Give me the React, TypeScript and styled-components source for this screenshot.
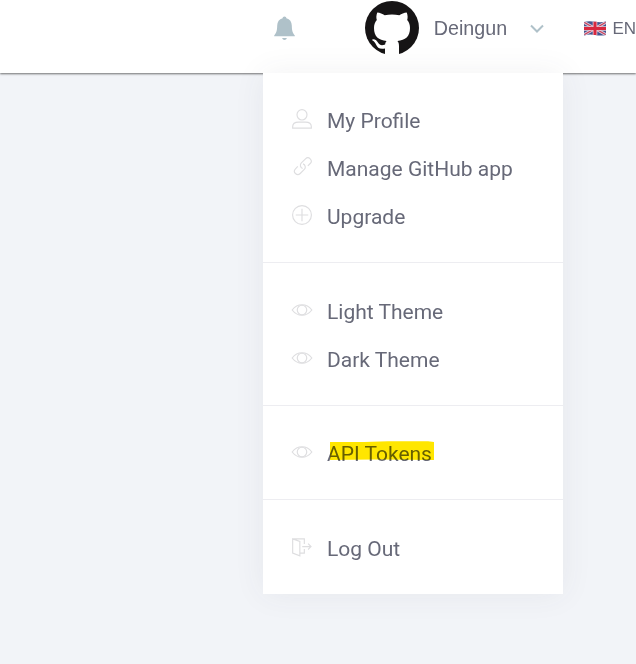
import React from "react";
import styled, { createGlobalStyle } from "styled-components";

const GlobalStyle = createGlobalStyle`
  * { box-sizing: border-box; }
  body { margin: 0; background: #f2f4f8; overflow: hidden; }
`;

const Page = styled.div`
  height: 664px;
  width: 636px;
  overflow: hidden;
  background: #f2f4f8;
  font-family: Roboto, sans-serif;
  color: #676978;
`;

const Header = styled.header`
  position: relative;
  display: flex;
  align-items: center;
  height: 73px;
  padding: 0 0 18px 272px;
  background: #fff;
  box-shadow: 0 1px 2px rgba(0, 0, 0, 0.55);
  font-family: "Liberation Sans", Arial, sans-serif;
`;

const BellButton = styled.span`
  display: flex;
  width: 93px;
  padding-top: 2px;
`;

const UserButton = styled.div`
  display: flex;
  align-items: center;
  width: 220px;
`;

const UserName = styled.span`
  width: 92px;
  margin-left: 15px;
  padding-top: 1px;
  font-size: 19.7px;
  line-height: 24px;
`;

const Language = styled.div`
  display: flex;
  align-items: center;
  gap: 6px;
  padding-top: 2px;
  font-size: 17px;
  white-space: nowrap;
`;

const Menu = styled.nav`
  position: absolute;
  top: 73px;
  left: 263px;
  width: 300px;
  background: #fff;
  box-shadow: 0 0 30px rgba(69, 65, 78, 0.07);
  font-family: Roboto, sans-serif;
`;

const Section = styled.div<{ $top?: number }>`
  padding: ${({ $top = 24 }) => $top}px 0 21px 29px;
  & + & { border-top: 1px solid #ededf1; }
`;

const Item = styled.div`
  display: flex;
  align-items: center;
  height: 48px;
  font-size: 21px;
  line-height: 28px;
  white-space: nowrap;
`;

const IconSlot = styled.span`
  display: flex;
  width: 35px;
  margin-top: -5px;
`;

const Label = styled.span`
  position: relative;
`;

const Highlight = styled.svg`
  position: absolute;
  left: 3px;
  top: 1px;
  mix-blend-mode: multiply;
`;

const paths = {
  user: (
    <>
      <ellipse cx="12" cy="7" rx="6" ry="6.2" />
      <path d="M.8 23v-1.600c0-3.800 3.400-5.600 7-5.600h8.400c3.600 0 7 1.800 7 5.600V23z" />
    </>
  ),
  link: (
    <g transform="translate(13 11) rotate(-45)">
      <path d="M4.500 4H8.500a4 4 0 0 0 0-8H1.500a4 4 0 0 0-3.600 5.800" />
      <path d="M-4.500-4H-8.500a4 4 0 0 0 0 8H-1.500a4 4 0 0 0 3.600-5.800" />
    </g>
  ),
  plus: (
    <>
      <circle cx="12" cy="12" r="11.300" />
      <path d="M12 4.500v15M4.500 12h15" />
    </>
  ),
  eye: (
    <>
      <path d="M.2 12S5 5.700 12 5.700 23.800 12 23.800 12 19 18.300 12 18.300.2 12 .2 12z" />
      <circle cx="12" cy="12" r="5.700" />
    </>
  ),
  logout: (
    <path d="M.8 2.200l8.600 3v17.500l-8.600-3.400zM.8 2.200h14v6.300M14.800 14.500v4.800H9.400M12.300 11.500h10.500M19.300 8l3.500 3.500-3.500 3.500" />
  ),
};

type IconName = keyof typeof paths;

const MenuIcon = ({ name }: { name: IconName }) => (
  <svg width="20" height="20" viewBox="0 0 24 24" fill="none" stroke="#dedee0" strokeWidth="1.400" overflow="visible">
    {paths[name]}
  </svg>
);

interface Entry {
  icon: IconName;
  text: string;
  marked?: boolean;
}

const sections: { top?: number; entries: Entry[] }[] = [
  {
    entries: [
      { icon: "user", text: "My Profile" },
      { icon: "link", text: "Manage GitHub app" },
      { icon: "plus", text: "Upgrade" },
    ],
  },
  {
    top: 25,
    entries: [
      { icon: "eye", text: "Light Theme" },
      { icon: "eye", text: "Dark Theme" },
    ],
  },
  { entries: [{ icon: "eye", text: "API Tokens", marked: true }] },
  { top: 25, entries: [{ icon: "logout", text: "Log Out" }] },
];

const Bell = () => (
  <svg width="24" height="25" viewBox="0 0 24 25" fill="#afc1c9">
    <path d="M12.500 .5c1.100 0 1.800.7 1.900 1.800 3.500.8 5.300 3.700 5.400 7.300.1 5.200.8 7.500 3 9.800v.9H2.200v-.9c2.200-2.300 2.900-4.600 3-9.800.1-3.600 1.900-6.500 5.400-7.300C10.700 1.200 11.400.5 12.500.5zM10.100 22h4.800c-.4 1.300-1.300 2-2.400 2s-2-.7-2.400-2z" />
  </svg>
);

const Avatar = () => (
  <svg width="54" height="54" viewBox="0 0 54 54">
    <circle cx="27" cy="27" r="27" fill="#161415" />
    <path
      fill="#fff"
      d="M12.300 11.400c2.600 0 5.200 1.400 7.400 2.900 4.700-1.200 9.900-1.200 14.600 0 2.200-1.500 4.800-2.900 7.400-2.900 1.100 2.700 1.200 5.300.5 7.700 2 2.300 2.800 4.900 2.800 7.900 0 8.600-4.600 12.200-12.600 13 1.300 1.400 1.600 3 1.600 5.200V54H20V47.500c-5.200 1-7.500-.5-9-4-.8-1.800-1.700-2.800-3.400-3.900-.7-.5-.6-1.400.5-1.400 2.500 0 3.900 1.700 5 3.600 1.600 2.600 3.800 2.900 7 1.700.2-1.500.6-2.600 1.500-3.500C13.600 39.200 9 35.600 9 27c0-3 .8-5.600 2.800-7.900-.7-2.400-.6-5 .5-7.700z"
    />
  </svg>
);

const Flag = () => (
  <svg width="22" height="15" viewBox="0 0 22 15">
    <path fill="#43548f" d="M0 1Q5-.3 11 .8T22 .5V14q-5 1-11 0T0 14.500z" />
    <path stroke="#d9cfdf" strokeWidth="3" d="M.5 1.500l21 12M21.500 1.500l-21 12" />
    <path stroke="#cd3f56" strokeWidth="1.300" d="M.5 1.500l21 12M21.500 1.500l-21 12" />
    <path stroke="#e9ccd6" strokeWidth="4.600" d="M11 .8V14M0 7.500h22" />
    <path stroke="#d8283f" strokeWidth="3" d="M11 .8V14M0 7.500h22" />
  </svg>
);

export default function App() {
  return (
    <Page>
      <GlobalStyle />
      <Header>
        <BellButton><Bell /></BellButton>
        <UserButton>
          <Avatar />
          <UserName>Deingun</UserName>
          <svg width="20" height="14" viewBox="0 0 20 14" fill="none" stroke="#afc1c9" strokeWidth="2">
            <path d="M5 4.500l6 6 6-6" />
          </svg>
        </UserButton>
        <Language><Flag />EN</Language>
        <Menu>
          {sections.map((section, index) => (
            <Section key={index} $top={section.top}>
              {section.entries.map(({ icon, text, marked }) => (
                <Item key={text}>
                  <IconSlot><MenuIcon name={icon} /></IconSlot>
                  <Label>
                    {text}
                    {marked && (
                      <Highlight width="104" height="20" viewBox="0 0 104 20">
                        <path fill="#ffe600" d="M0 1L34 1 58 .3 98 .2 104 1V19L44 18.500 0 19z" />
                      </Highlight>
                    )}
                  </Label>
                </Item>
              ))}
            </Section>
          ))}
        </Menu>
      </Header>
    </Page>
  );
}
